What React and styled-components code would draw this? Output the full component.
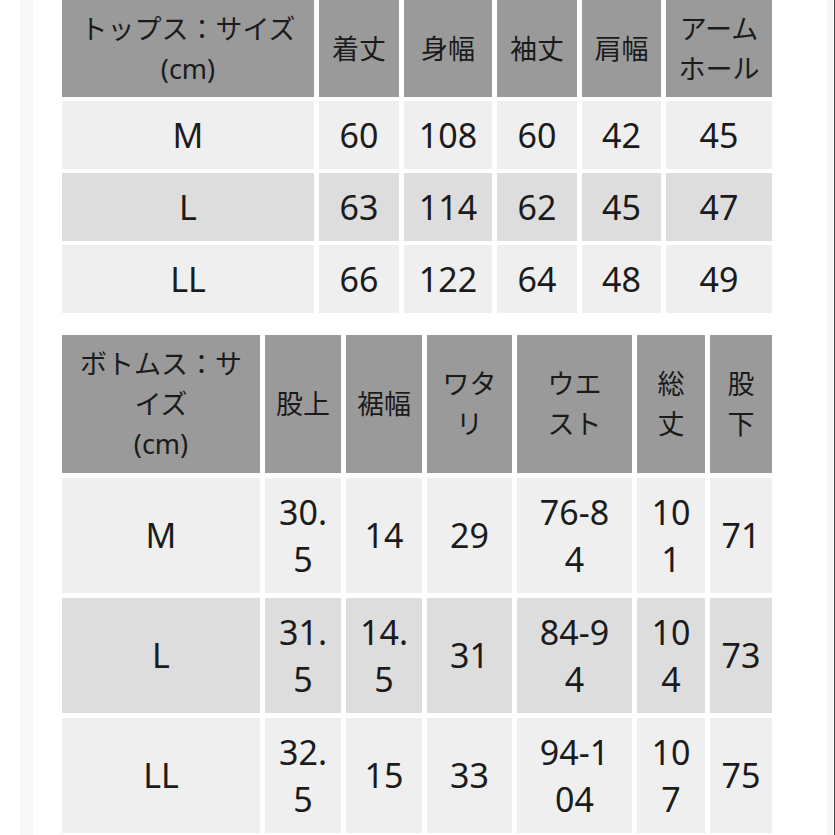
import React from 'react';
import styled, { createGlobalStyle } from 'styled-components';

const GlobalStyle = createGlobalStyle`
  html, body {
    margin: 0;
    padding: 0;
    background: #ffffff;
  }
  body {
    height: 835px;
    overflow: hidden;
    box-shadow: inset -1px 0 0 #4a4a4a;
    font-family: "Noto Sans", "Noto Sans CJK JP", sans-serif;
    color: #1b1b1b;
  }
`;

const Frame = styled.div`
  margin-left: 20px;
  width: 745px;
  padding: 0 25px 0 24px;
  border-left: 13px solid #f8f8f8;
  border-right: 6px solid #f7f7f7;
  min-height: 835px;
`;

const SizeTable = styled.table`
  width: 720px;
  table-layout: fixed;
  border-collapse: separate;
  border-spacing: ${(p) => p.$spacing};
  margin: ${(p) => p.$margin};
`;

const HeadCell = styled.th`
  background: #9a9a9a;
  font-weight: 400;
  font-size: 27px;
  line-height: 40px;
  padding: ${(p) => p.$pad} 4px;
  text-align: center;
  vertical-align: middle;
  white-space: pre-line;
`;

const Cell = styled.td`
  background: ${(p) => (p.$shade ? '#dddddd' : '#efefef')};
  font-size: 34px;
  line-height: 47px;
  padding: 10.5px 4px;
  text-align: center;
  vertical-align: middle;
  white-space: pre-line;
`;

const tops = {
  widths: [252, 80, 88, 80, 79, 106],
  head: ['トップス：サイズ\n(cm)', '着丈', '身幅', '袖丈', '肩幅', 'アーム\nホール'],
  rows: [
    ['M', '60', '108', '60', '42', '45'],
    ['L', '63', '114', '62', '45', '47'],
    ['LL', '66', '122', '64', '48', '49'],
  ],
};

const bottoms = {
  widths: [198, 76, 76, 85, 115, 68, 62],
  head: ['ボトムス：サ\nイズ\n(cm)', '股上', '裾幅', 'ワタ\nリ', 'ウエ\nスト', '総\n丈', '股\n下'],
  rows: [
    ['M', '30.\n5', '14', '29', '76-8\n4', '10\n1', '71'],
    ['L', '31.\n5', '14.\n5', '31', '84-9\n4', '10\n4', '73'],
    ['LL', '32.\n5', '15', '33', '94-1\n04', '10\n7', '75'],
  ],
};

const Chart = ({ data, spacing, margin, headPad }) => (
  <SizeTable $spacing={spacing} $margin={margin}>
    <colgroup>
      {data.widths.map((w, i) => (
        <col key={i} style={{ width: w }} />
      ))}
    </colgroup>
    <thead>
      <tr>
        {data.head.map((h) => (
          <HeadCell key={h} $pad={headPad}>{h}</HeadCell>
        ))}
      </tr>
    </thead>
    <tbody>
      {data.rows.map((row, r) => (
        <tr key={row[0]}>
          {row.map((v, c) => (
            <Cell key={c} $shade={r % 2 === 1}>{v}</Cell>
          ))}
        </tr>
      ))}
    </tbody>
  </SizeTable>
);

export default function App() {
  return (
    <>
      <GlobalStyle />
      <Frame>
        <Chart data={tops} spacing="5px 4px" margin="-4px 0 0" headPad="8.5px" />
        <Chart data={bottoms} spacing="5px" margin="13px 0 0" headPad="9px" />
      </Frame>
    </>
  );
}
